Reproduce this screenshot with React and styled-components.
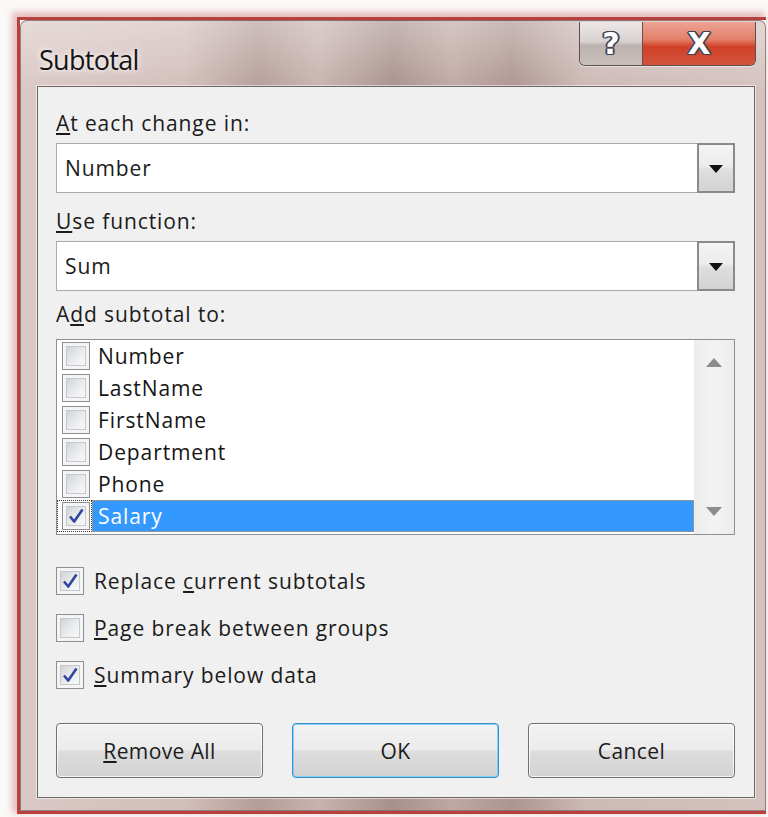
import React from 'react'
import styled, { createGlobalStyle } from 'styled-components'

const GlobalStyle = createGlobalStyle`
  html, body {
    margin: 0;
    padding: 0;
    background: #fbf8f8;
  }
  body {
    width: 768px;
    height: 817px;
    overflow: hidden;
    font-family: 'Open Sans', 'Noto Sans', sans-serif;
    color: #1b1b1b;
  }
`

const Screen = styled.div`
  width: 768px;
  height: 817px;
  overflow: hidden;
  box-sizing: border-box;
  padding: 17px 0 0 17px;
`

const Glow = styled.div`
  display: inline-block;
  border: 3px solid #b8413f;
  border-right: none;
  box-shadow: -3px -3px 6px 2px rgba(205, 120, 120, 0.45);
`

const Frame = styled.div`
  width: 746px;
  height: 791px;
  box-sizing: border-box;
  border: 1px solid rgba(90, 60, 58, 0.55);
  border-radius: 7px 7px 0 0;
  padding: 0 10px 12px 16px;
  display: flex;
  flex-direction: column;
  background:
    linear-gradient(180deg, rgba(255, 255, 255, 0.35) 0px, rgba(255, 255, 255, 0) 70px),
    linear-gradient(
      90deg,
      #d9c8c5 0%,
      #d2bebb 22%,
      #b49d99 32%,
      #c8b3b0 40%,
      #a8918d 50%,
      #bfa8a4 58%,
      #ad9591 66%,
      #cdb9b6 76%,
      #d4c2bf 100%
    );
`

const TitleBar = styled.div`
  height: 65px;
  display: flex;
  justify-content: space-between;
  align-items: flex-start;
  margin-left: -16px;
  margin-right: -10px;
`

const TitleText = styled.div`
  padding: 20px 0 0 18px;
  font-size: 27px;
  letter-spacing: -0.7px;
  color: #151515;
  text-shadow: 0 0 10px rgba(255, 255, 255, 0.9), 0 0 4px rgba(255, 255, 255, 0.8);
`

const CaptionButtons = styled.div`
  display: flex;
  margin: 1px 9px 0 0;
  border: 1px solid #5d4f4e;
  border-top: none;
  border-radius: 0 0 6px 6px;
  overflow: hidden;
  box-shadow: 0 1px 0 rgba(255, 255, 255, 0.5);
`

const CaptionButton = styled.div`
  width: ${p => p.width}px;
  height: 43px;
  display: flex;
  align-items: center;
  justify-content: center;
  font-family: 'DejaVu Sans', sans-serif;
  font-weight: bold;
  font-size: ${p => p.size}px;
  color: #fff;
  text-shadow:
    1px 0 0 #3c4050, -1px 0 0 #3c4050, 0 1px 0 #3c4050, 0 -1px 0 #3c4050,
    1px 1px 0 #3c4050, -1px -1px 0 #3c4050, 1px -1px 0 #3c4050, -1px 1px 0 #3c4050,
    2px 0 0 #5a5e6e, -2px 0 0 #5a5e6e;
  background: ${p => p.bg};
  & + & {
    border-left: 1px solid #6a4c48;
  }
`

const Client = styled.div`
  flex: 1;
  box-sizing: border-box;
  background: #f0f0f0;
  border: 1px solid #6f6664;
  box-shadow: 0 0 0 1px rgba(255, 255, 255, 0.55);
  padding: 19px 19px 0 18px;
  display: flex;
  flex-direction: column;
  font-size: 21px;
  letter-spacing: 0.9px;
`

const Label = styled.div`
  height: 34px;
  line-height: 34px;
  margin-top: ${p => p.top || 0}px;
`

const Combo = styled.div`
  margin-top: 3px;
  height: 50px;
  box-sizing: border-box;
  display: flex;
  background: #fff;
  border: 1px solid #a9a9a9;
  border-right: none;
`

const ComboValue = styled.div`
  flex: 1;
  padding-left: 8px;
  line-height: 48px;
`

const ComboArrow = styled.div`
  width: 38px;
  margin: -1px 0;
  box-sizing: border-box;
  border: 2px solid #8a8a8a;
  background: linear-gradient(180deg, #f4f4f4 0%, #ececec 45%, #dedede 55%, #d3d3d3 100%);
  display: flex;
  align-items: center;
  justify-content: center;
`

const DownTriangle = styled.span`
  width: 0;
  height: 0;
  border-left: 7px solid transparent;
  border-right: 7px solid transparent;
  border-top: 8px solid #111;
  margin-top: 2px;
`

const ListBox = styled.div`
  margin-top: 8px;
  height: 196px;
  box-sizing: border-box;
  border: 1px solid #8d9196;
  background: #fff;
  display: flex;
`

const Items = styled.div`
  flex: 1;
  display: flex;
  flex-direction: column;
`

const Item = styled.div`
  height: 32px;
  display: flex;
  align-items: stretch;
`

const CheckCell = styled.div`
  width: 35px;
  box-sizing: border-box;
  padding-left: 5px;
  display: flex;
  align-items: center;
  outline: ${p => (p.focused ? '1px dotted #333' : 'none')};
  outline-offset: -1px;
`

const ItemText = styled.div`
  flex: 1;
  box-sizing: border-box;
  padding-left: 5px;
  line-height: 30px;
  color: ${p => (p.selected ? '#fff' : '#151515')};
  background: ${p => (p.selected ? '#3399ff' : 'transparent')};
  border: 1px ${p => (p.selected ? 'dotted #e8923a' : 'solid transparent')};
`

const ScrollBar = styled.div`
  width: 40px;
  background: linear-gradient(90deg, #ececec 0%, #f3f3f3 50%, #ececec 100%);
  display: flex;
  flex-direction: column;
  justify-content: space-between;
  align-items: center;
  padding: 18px 0 18px;
  box-sizing: border-box;
`

const ScrollArrow = styled.span`
  width: 0;
  height: 0;
  border-left: 8px solid transparent;
  border-right: 8px solid transparent;
  ${p =>
    p.up
      ? 'border-bottom: 9px solid #8c8c8c;'
      : 'border-top: 9px solid #8c8c8c;'}
`

const Box = styled.span`
  width: 28px;
  height: 28px;
  flex-shrink: 0;
  box-sizing: border-box;
  border: 1px solid #8e8f8f;
  padding: 3px;
  background: #f4f4f4;
  display: flex;
`

const BoxInner = styled.span`
  flex: 1;
  border: 1px solid #c5c8cc;
  background: linear-gradient(135deg, #d0d3d8 0%, #e6e8ea 45%, #fafafa 100%);
  display: flex;
  align-items: center;
  justify-content: center;
`

const Options = styled.div`
  margin-top: 32px;
  display: flex;
  flex-direction: column;
  gap: 19px;
`

const OptionRow = styled.label`
  display: flex;
  align-items: center;
  height: 28px;
  gap: 10px;
`

const ButtonRow = styled.div`
  margin-top: 34px;
  display: flex;
  justify-content: space-between;
`

const Button = styled.div`
  width: 207px;
  height: 55px;
  box-sizing: border-box;
  border: 1px solid ${p => (p.primary ? '#3a8ccc' : '#707070')};
  border-radius: 4px;
  display: flex;
  align-items: center;
  justify-content: center;
  font-size: 21px;
  letter-spacing: 0.4px;
  background: linear-gradient(180deg, #f3f3f3 0%, #ebebeb 48%, #dddddd 52%, #d2d2d2 100%);
  box-shadow: inset 0 0 0 1px ${p => (p.primary ? 'rgba(120, 210, 245, 0.9)' : 'rgba(255, 255, 255, 0.8)')};
`

const Check = () => (
  <svg width="18" height="18" viewBox="0 0 18 18">
    <path d="M3 9.5 L7.2 14.5 L15.5 2.5" fill="none" stroke="#2f45a0" strokeWidth="2.6" strokeLinejoin="round" />
  </svg>
)

const CheckBox = ({ checked }) => (
  <Box>
    <BoxInner>{checked && <Check />}</BoxInner>
  </Box>
)

const fields = ['Number', 'LastName', 'FirstName', 'Department', 'Phone', 'Salary']

export default function App() {
  return (
    <Screen>
      <GlobalStyle />
      <Glow>
        <Frame>
          <TitleBar>
            <TitleText>Subtotal</TitleText>
            <CaptionButtons>
              <CaptionButton
                width={62}
                size={30}
                bg="linear-gradient(180deg, #ece7e6 0%, #d9d2d1 45%, #bcb2b0 55%, #c9c0be 100%)"
              >
                ?
              </CaptionButton>
              <CaptionButton
                width={112}
                size={30}
                bg="linear-gradient(180deg, #eda393 0%, #e4806c 40%, #cf4027 58%, #d2553c 100%)"
              >
                X
              </CaptionButton>
            </CaptionButtons>
          </TitleBar>

          <Client>
            <Label>
              <u>A</u>t each change in:
            </Label>
            <Combo>
              <ComboValue>Number</ComboValue>
              <ComboArrow>
                <DownTriangle />
              </ComboArrow>
            </Combo>

            <Label top={11}>
              <u>U</u>se function:
            </Label>
            <Combo>
              <ComboValue>Sum</ComboValue>
              <ComboArrow>
                <DownTriangle />
              </ComboArrow>
            </Combo>

            <Label top={6}>
              A<u>d</u>d subtotal to:
            </Label>
            <ListBox>
              <Items>
                {fields.map(name => {
                  const selected = name === 'Salary'
                  return (
                    <Item key={name}>
                      <CheckCell focused={selected}>
                        <CheckBox checked={selected} />
                      </CheckCell>
                      <ItemText selected={selected}>{name}</ItemText>
                    </Item>
                  )
                })}
              </Items>
              <ScrollBar>
                <ScrollArrow up />
                <ScrollArrow />
              </ScrollBar>
            </ListBox>

            <Options>
              <OptionRow>
                <CheckBox checked />
                <span>
                  Replace <u>c</u>urrent subtotals
                </span>
              </OptionRow>
              <OptionRow>
                <CheckBox />
                <span>
                  <u>P</u>age break between groups
                </span>
              </OptionRow>
              <OptionRow>
                <CheckBox checked />
                <span>
                  <u>S</u>ummary below data
                </span>
              </OptionRow>
            </Options>

            <ButtonRow>
              <Button>
                <span>
                  <u>R</u>emove All
                </span>
              </Button>
              <Button primary>OK</Button>
              <Button>Cancel</Button>
            </ButtonRow>
          </Client>
        </Frame>
      </Glow>
    </Screen>
  )
}
